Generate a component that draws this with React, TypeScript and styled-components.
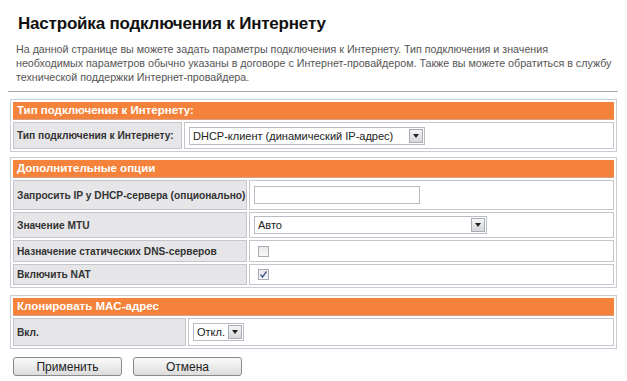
import React from "react";
import styled, { createGlobalStyle } from "styled-components";

const GlobalStyle = createGlobalStyle`
  html, body {
    margin: 0;
    padding: 0;
    background: #fff;
  }
  body {
    font-family: "Liberation Sans", Arial, sans-serif;
    color: #333;
  }
`;

const Page = styled.div`
  width: 609px;
  padding: 14px 0 0 9px;
`;

const Title = styled.h1`
  margin: 0 0 0 9px;
  font-size: 17px;
  line-height: 20px;
  font-weight: bold;
  color: #111;
  letter-spacing: -0.2px;
`;

const Intro = styled.p`
  margin: 8px 0 0 7px;
  font-size: 10.7px;
  line-height: 14px;
  color: #555;
  width: 600px;
`;

const Rule = styled.hr`
  margin: 7px 0 0 -1px;
  border: 0;
  border-top: 1px solid #a8a8a8;
  width: 610px;
`;

const Section = styled.div<{ $label: number; $top: number }>`
  display: grid;
  grid-template-columns: ${(p) => p.$label}px 1fr;
  gap: 2px;
  padding: 2px;
  border: 1px solid #c8ccd4;
  margin: ${(p) => p.$top}px 0 0 1px;
  width: 601px;
`;

const Header = styled.div`
  grid-column: 1 / -1;
  height: 18px;
  box-sizing: border-box;
  background: #f5823a;
  border-bottom: 1px solid #d8a080;
  color: #fff;
  font-weight: bold;
  font-size: 11.5px;
  line-height: 17px;
  padding-left: 4px;
`;

const Label = styled.div<{ $h: number }>`
  height: ${(p) => p.$h}px;
  box-sizing: border-box;
  background: #e6e6e8;
  border: 1px solid #c4c6cc;
  display: flex;
  align-items: center;
  padding-left: 3px;
  font-size: 10.2px;
  font-weight: bold;
  color: #333;
  white-space: nowrap;
`;

const Value = styled.div<{ $h: number }>`
  height: ${(p) => p.$h}px;
  box-sizing: border-box;
  background: #fff;
  border: 1px solid #c4c6cc;
  display: flex;
  align-items: center;
  padding-left: 4px;
`;

const Select = styled.div<{ $w: number }>`
  width: ${(p) => p.$w}px;
  height: 18px;
  box-sizing: border-box;
  border: 1px solid #b8bcc4;
  background: #fff;
  display: flex;
  align-items: center;
  font-size: 11px;
  color: #222;
  padding-left: 3px;
`;

const SelectText = styled.span`
  flex: 1;
  white-space: nowrap;
  overflow: hidden;
`;

const Arrow = styled.span`
  width: 14px;
  height: 14px;
  margin-right: 1px;
  box-sizing: border-box;
  border: 1px solid #a8acb4;
  background: linear-gradient(#f4f4f4, #d8d8dc);
  display: flex;
  align-items: center;
  justify-content: center;
  &::after {
    content: "";
    border-left: 3px solid transparent;
    border-right: 3px solid transparent;
    border-top: 4px solid #222;
  }
`;

const TextInput = styled.div`
  width: 166px;
  height: 18px;
  box-sizing: border-box;
  border: 1px solid #b8bcc4;
  background: #fff;
`;

const Check = styled.span`
  width: 11px;
  height: 11px;
  margin-left: 4px;
  box-sizing: border-box;
  border: 1px solid #a8acb4;
  background: linear-gradient(#e8e8ea, #f8f8f8);
  display: flex;
  align-items: center;
  justify-content: center;
`;

const Buttons = styled.div`
  display: flex;
  gap: 11px;
  margin: 8px 0 0 4px;
`;

const Button = styled.button`
  width: 109px;
  height: 19px;
  border: 1px solid #8a8a8a;
  border-radius: 3px;
  background: linear-gradient(#fafafa, #dcdcdc);
  font-family: "Liberation Sans", Arial, sans-serif;
  font-size: 12px;
  color: #222;
  padding: 0;
`;

const Dropdown: React.FC<{ w: number; text: string }> = ({ w, text }) => (
  <Select $w={w}>
    <SelectText>{text}</SelectText>
    <Arrow />
  </Select>
);

const Checkbox: React.FC<{ checked?: boolean }> = ({ checked }) => (
  <Check>
    {checked && (
      <svg width="9" height="9" viewBox="0 0 9 9">
        <path d="M1.5 4.5 L3.5 7 L7.5 1.5" fill="none" stroke="#4a5a8a" strokeWidth="1.4" />
      </svg>
    )}
  </Check>
);

export default function App() {
  return (
    <Page>
      <GlobalStyle />
      <Title>Настройка подключения к Интернету</Title>
      <Intro>
        На данной странице вы можете задать параметры подключения к Интернету. Тип подключения и значения
        необходимых параметров обычно указаны в договоре с Интернет-провайдером. Также вы можете обратиться в службу
        технической поддержки Интернет-провайдера.
      </Intro>
      <Rule />

      <Section $label={169} $top={7}>
        <Header>Тип подключения к Интернету:</Header>
        <Label $h={27}>Тип подключения к Интернету:</Label>
        <Value $h={27}>
          <Dropdown w={236} text="DHCP-клиент (динамический IP-адрес)" />
        </Value>
      </Section>

      <Section $label={234} $top={5}>
        <Header>Дополнительные опции</Header>
        <Label $h={30}>Запросить IP у DHCP-сервера (опционально)</Label>
        <Value $h={30}>
          <TextInput />
        </Value>
        <Label $h={26}>Значение MTU</Label>
        <Value $h={26}>
          <Dropdown w={233} text="Авто" />
        </Value>
        <Label $h={22}>Назначение статических DNS-серверов</Label>
        <Value $h={22}>
          <Checkbox />
        </Value>
        <Label $h={21}>Включить NAT</Label>
        <Value $h={21}>
          <Checkbox checked />
        </Value>
      </Section>

      <Section $label={173} $top={7}>
        <Header>Клонировать MAC-адрес</Header>
        <Label $h={28}>Вкл.</Label>
        <Value $h={28}>
          <Dropdown w={51} text="Откл." />
        </Value>
      </Section>

      <Buttons>
        <Button>Применить</Button>
        <Button>Отмена</Button>
      </Buttons>
    </Page>
  );
}
